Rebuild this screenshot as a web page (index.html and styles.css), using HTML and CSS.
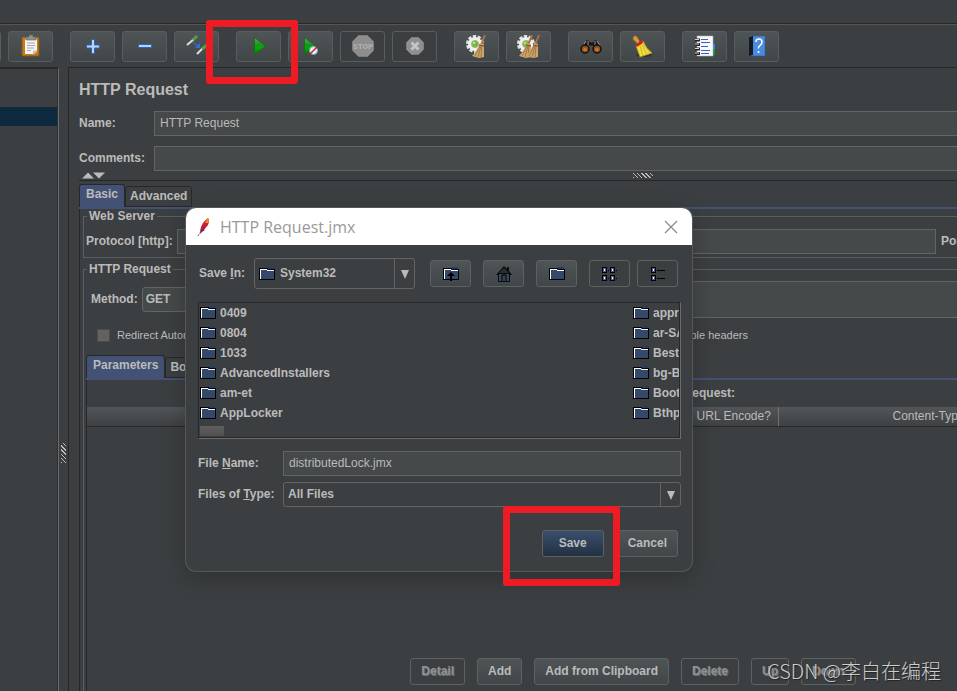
FILE: index.html
```html
<!DOCTYPE html>
<html lang="en">
<head>
    <meta charset="UTF-8">
    <meta name="viewport" content="width=device-width, initial-scale=1.0">
    <title>HTTP Request.jmx</title>
    <link rel="stylesheet" href="styles.css">
</head>
<body>
    <!-- Shared icons -->
    <svg class="defs" aria-hidden="true">
        <defs>
            <linearGradient id="green" x1="0" y1="0" x2="0" y2="1">
                <stop offset="0" stop-color="#5fa75a"/>
                <stop offset="0.5" stop-color="#14901a"/>
                <stop offset="0.55" stop-color="#00b400"/>
                <stop offset="1" stop-color="#067a06"/>
            </linearGradient>
            <symbol id="folder" viewBox="0 0 16 14">
                <path d="M9 0h6v2H9z" fill="#283a63"/>
                <path d="M0 1h9v1h7v11H0z" fill="#000"/>
                <path d="M1 2h8l1 1h5v9H1z" fill="#34486a"/>
                <path d="M1 12V2h7v1h7v1H8V3H2v9z" fill="#fff"/>
            </symbol>
            <symbol id="gear" viewBox="0 0 18 18">
                <circle cx="9" cy="9" r="7" fill="none" stroke="#e4e4e4" stroke-width="4" stroke-dasharray="3 1.4"/>
                <circle cx="9" cy="9" r="5" fill="none" stroke="#efefef" stroke-width="4"/>
                <circle cx="9" cy="9" r="3.5" fill="#74bd24" stroke="#a9a9a9" stroke-width="1"/>
                <circle cx="8" cy="8" r="1.3" fill="#b5e66a"/>
            </symbol>
            <symbol id="broom" viewBox="0 0 14 24">
                <path d="M13 1L9 11" stroke="#a87344" stroke-width="2"/>
                <path d="M8 9l4 1v13l-5 1-7-2q5-5 8-13z" fill="#cfa56c"/>
                <path d="M8 12L3 22M9 12L6 23M10 12l-1 11" stroke="#94693a" stroke-width=".8" fill="none"/>
                <path d="M7 11l5 1" stroke="#704722" stroke-width="1"/>
            </symbol>
        </defs>
    </svg>

    <header class="menubar"></header>

    <div class="toolbar">
        <button class="tool cut" type="button" aria-label="Copy"></button>
        <button class="tool" type="button" aria-label="Paste">
            <svg viewBox="0 0 25 25">
                <rect x="4" y="3" width="17" height="19" rx="1" fill="#c07d20" stroke="#8e570c"/>
                <path d="M7 5h12v12l-3 3H7z" fill="#f4f4f4"/>
                <path d="M19 16l-4 1v4z" fill="#bdbdbd"/>
                <path d="M9 9h8M9 11.500h8M9 14h7M9 16.500h4" stroke="#a8a8a8"/>
                <path d="M8 3h3V1h4v2h3v3H8z" fill="#8d938d" stroke="#5a605a" stroke-width=".6"/>
            </svg>
        </button>
        <button class="tool group" type="button" aria-label="Expand All">
            <svg viewBox="0 0 25 25">
                <path d="M6.500 11h5V5.500h3V11h5v3h-5v5.500h-3V14h-5z" fill="#b7d3f5" stroke="#2e66b4"/>
            </svg>
        </button>
        <button class="tool" type="button" aria-label="Collapse All">
            <svg viewBox="0 0 25 25">
                <path d="M6.500 10.500h13v3h-13z" fill="#b7d3f5" stroke="#2e66b4"/>
            </svg>
        </button>
        <button class="tool" type="button" aria-label="Toggle">
            <svg viewBox="0 0 25 25">
                <path d="M3 11l7-6" stroke="#dededa" stroke-width="2"/>
                <path d="M9 6l4-4" stroke="#5c9a43" stroke-width="3"/>
                <path d="M13 20l6-6" stroke="#dededa" stroke-width="2"/>
                <path d="M18 15l5-4" stroke="#5c9a43" stroke-width="3"/>
                <path d="M9 8l5 4" stroke="#2b74de" stroke-width="1.500" stroke-dasharray="2 1"/>
                <path d="M16 9v5h-5z" fill="#2b74de"/>
            </svg>
        </button>
        <button class="tool group" type="button" aria-label="Start">
            <svg viewBox="0 0 25 25">
                <path d="M8.500 3.500L19.500 12 8.500 20.500z" fill="url(#green)" stroke="#176b19" stroke-width=".8"/>
            </svg>
        </button>
        <button class="tool" type="button" aria-label="Start no pauses">
            <svg viewBox="0 0 25 25">
                <path d="M6.500 3.500L17.500 12 6.500 20.500z" fill="url(#green)" stroke="#176b19" stroke-width=".8"/>
                <circle cx="15.500" cy="16.500" r="4" fill="#e8f1fb" stroke="#7b9fc6"/>
                <path d="M12 20l7-7" stroke="#d51c1c" stroke-width="1.500"/>
            </svg>
        </button>
        <button class="tool" type="button" aria-label="Stop" disabled>
            <svg viewBox="0 0 25 25">
                <path d="M8.500 1.500h9l6 6v9l-6 6h-9l-6-6v-9z" fill="#8d8d8d" stroke="#7c7c7c"/>
                <text x="13" y="15" text-anchor="middle" class="stop-word">STOP</text>
            </svg>
        </button>
        <button class="tool" type="button" aria-label="Shutdown" disabled>
            <svg viewBox="0 0 25 25">
                <path d="M9.500 3.500h7l5 5v7l-5 5h-7l-5-5v-7z" fill="#8f8f8f" stroke="#7e7e7e"/>
                <path d="M9.500 8.500l7 7m0-7l-7 7" stroke="#c5c5c5" stroke-width="3"/>
            </svg>
        </button>
        <button class="tool group" type="button" aria-label="Clear">
            <svg viewBox="0 0 25 25">
                <use href="#gear" x="2" y="1" width="18" height="18"/>
                <use href="#broom" x="8" y="0" width="14" height="24"/>
            </svg>
        </button>
        <button class="tool" type="button" aria-label="Clear All">
            <svg viewBox="0 0 25 25">
                <use href="#gear" x="1" y="1" width="18" height="18"/>
                <use href="#broom" x="3" y="0" width="14" height="24"/>
                <use href="#broom" x="10" y="0" width="14" height="24"/>
            </svg>
        </button>
        <button class="tool group" type="button" aria-label="Search">
            <svg viewBox="0 0 25 25">
                <path d="M3 13L8 6h3l1 2h3l1-2h3l4 7v3h-8v-4h-4v4H3z" fill="#161616" stroke="#5b5b5b" stroke-width=".7"/>
                <path d="M8 7l-3 5M19 7l3 5M10 7v5M17 7v5" stroke="#aaa" stroke-width=".9"/>
                <circle cx="7" cy="15" r="4" fill="#944f19" stroke="#111" stroke-width="1.500"/>
                <circle cx="19" cy="15" r="4" fill="#944f19" stroke="#111" stroke-width="1.500"/>
                <circle cx="7" cy="15.500" r="1.800" fill="#c47534"/>
                <circle cx="19" cy="15.500" r="1.800" fill="#c47534"/>
            </svg>
        </button>
        <button class="tool" type="button" aria-label="Reset Search">
            <svg viewBox="0 0 25 25">
                <ellipse cx="14" cy="21" rx="8" ry="2" fill="#333637"/>
                <path d="M3 3q3-3 5 1l2 4-3 2q-1-3-4-4z" fill="#d59a3f" stroke="#8a5a1b" stroke-width=".8"/>
                <path d="M6 12l7-5q3 7 9 12l-12 4Q8 17 6 12z" fill="#f1de3d" stroke="#ad9517" stroke-width=".7"/>
                <path d="M10 12l3 10M12 11l5 10M13 10l7 9" stroke="#c9ae20" stroke-width=".8" fill="none"/>
                <path d="M6 11l6-5 1 3-6 4z" fill="#d51d1d"/>
            </svg>
        </button>
        <button class="tool group" type="button" aria-label="Function Helper">
            <svg viewBox="0 0 25 25">
                <path d="M20 10h3v5h-3z" fill="#2584ea"/>
                <path d="M20 15h3v6h-3z" fill="#159019"/>
                <path d="M5 2h16v20H5z" fill="#f8f8f8" stroke="#b2b2b2" stroke-width=".6"/>
                <path d="M9 5.500h7M9 8.500h9M9 12.500h7M9 16.500h9M9 19.500h8" stroke="#2e68c5"/>
                <path d="M3 6h5M3 10.500h5M3 15h5M3 19.500h5" stroke="#222" stroke-width="3"/>
                <path d="M3 5.500h4M3 10h4M3 14.500h4M3 19h4" stroke="#d8d8d8"/>
            </svg>
        </button>
        <button class="tool" type="button" aria-label="Help">
            <svg viewBox="0 0 25 25">
                <path d="M6 2h15v20H5V3z" fill="#4a8be0" stroke="#2a5a9c" stroke-width=".6"/>
                <path d="M5 3l4-1v19l-4 1z" fill="#17191c"/>
                <path d="M12 8q0-3 3-3t3 3q0 2-2 3.500t-1.500 3" stroke="#fff" stroke-width="1.500" fill="none"/>
                <circle cx="14.500" cy="18" r="1.100" fill="#fff"/>
            </svg>
        </button>
    </div>

    <div class="workspace">
        <aside class="tree">
            <div class="tree-selected"></div>
        </aside>
        <div class="splitter"><span class="grip grip-v"></span></div>

        <main class="panel">
            <h1>HTTP Request</h1>
            <div class="field-row">
                <label for="name">Name:</label>
                <input id="name" type="text" value="HTTP Request">
            </div>
            <div class="field-row">
                <label for="comments">Comments:</label>
                <input id="comments" type="text">
            </div>
            <div class="split-bar">
                <svg width="24" height="7" viewBox="0 0 24 7"><path d="M0 6.500L6 .5l6 6zM11 .5h12l-6 6z" fill="#bbb"/></svg>
                <span class="grip grip-h"></span>
            </div>

            <div class="tabs">
                <button class="tab active" type="button">Basic</button>
                <button class="tab" type="button">Advanced</button>
            </div>
            <div class="tab-page">
                <fieldset>
                    <legend>Web Server</legend>
                    <div class="server-row">
                        <label for="protocol">Protocol [http]:</label>
                        <input id="protocol" type="text">
                        <label class="port" for="protocol">Port Number:</label>
                    </div>
                </fieldset>
                <fieldset class="request">
                    <legend>HTTP Request</legend>
                    <div class="method-row">
                        <label for="method">Method:</label>
                        <select id="method"><option>GET</option></select>
                        <input type="text" aria-label="Path">
                    </div>
                    <div class="check-row">
                        <label><input type="checkbox">Redirect Automatically</label>
                        <label class="headers">Browser-compatible headers</label>
                    </div>
                    <div class="tabs inner">
                        <button class="tab active" type="button">Parameters</button>
                        <button class="tab" type="button">Body Data</button>
                    </div>
                    <div class="params">
                        <p>Send Parameters With the Request:</p>
                        <table>
                            <thead>
                                <tr>
                                    <th></th>
                                    <th class="encode">URL Encode?</th>
                                    <th class="ctype">Content-Type</th>
                                </tr>
                            </thead>
                        </table>
                        <div class="actions">
                            <button class="btn" type="button" disabled>Detail</button>
                            <button class="btn" type="button">Add</button>
                            <button class="btn" type="button">Add from Clipboard</button>
                            <button class="btn" type="button" disabled>Delete</button>
                            <button class="btn" type="button" disabled>Up</button>
                            <button class="btn" type="button" disabled>Down</button>
                        </div>
                    </div>
                </fieldset>
            </div>
        </main>
    </div>

    <!-- Save dialog -->
    <div class="dialog" role="dialog" aria-labelledby="dialogTitle">
        <div class="dialog-title">
            <svg width="14" height="20" viewBox="0 0 14 20">
                <path d="M11 1q2 2 0 7l-4 5-4 2q0-5 3-9 2-3 5-5z" fill="#c9213c"/>
                <path d="M11 1q2 2 0 5L8 6q1-3 3-5z" fill="#f28b27"/>
                <path d="M4 12l4 1-3 2-2 2z" fill="#7b2767"/>
                <path d="M1 19L8 8" stroke="#5b2050" stroke-width=".8" stroke-dasharray="2 1"/>
            </svg>
            <span id="dialogTitle">HTTP Request.jmx</span>
            <button class="close" type="button" aria-label="Close">
                <svg width="14" height="14" viewBox="0 0 14 14"><path d="M1 1l12 12M13 1L1 13" stroke="#8a8a8a" stroke-width="1.200"/></svg>
            </button>
        </div>
        <div class="dialog-body">
            <div class="save-in">
                <label for="saveIn">Save <u>I</u>n:</label>
                <div class="combo">
                    <select id="saveIn"><option>System32</option></select>
                    <svg class="combo-icon" width="16" height="14"><use href="#folder"/></svg>
                </div>
                <button class="nav" type="button" aria-label="Up One Level">
                    <svg width="16" height="16" viewBox="0 0 16 16">
                        <use href="#folder" y="1" width="16" height="14"/>
                        <path d="M8 6l4 4H9v5H7v-5H4z" fill="#000"/>
                    </svg>
                </button>
                <button class="nav" type="button" aria-label="Home">
                    <svg width="16" height="16" viewBox="0 0 16 16">
                        <path d="M8 0l3 3V1h2v4l3 4h-2v7H2V9H0z" fill="#0a0a0a"/>
                        <path d="M3 8h10v7H3z" fill="#34486a"/>
                        <path d="M8 2l5 5H3z" fill="#2b2e30"/>
                        <path d="M6 15V9h4v6" fill="#3c4145" stroke="#000"/>
                    </svg>
                </button>
                <button class="nav" type="button" aria-label="Create New Folder">
                    <svg width="16" height="14"><use href="#folder"/></svg>
                </button>
                <button class="nav flat" type="button" aria-label="List">
                    <svg width="16" height="16" viewBox="0 0 16 16">
                        <path d="M0 1h5v6H0zM8 1h5v6H8zM0 9h5v6H0zM8 9h5v6H8zM6 4h1v1H6zM14 4h1v1h-1zM6 12h1v1H6zM14 12h1v1h-1z" fill="#000"/>
                        <path d="M1 2h3v4H1zM9 2h3v4H9zM1 10h3v4H1zM9 10h3v4H9z" fill="#4a6291"/>
                        <path d="M2 3h1v2H2zM10 3h1v2h-1zM2 11h1v2H2zM10 11h1v2h-1z" fill="#fff"/>
                    </svg>
                </button>
                <button class="nav flat" type="button" aria-label="Details">
                    <svg width="16" height="16" viewBox="0 0 16 16">
                        <path d="M1 1h5v6H1zM1 9h5v6H1zM7 4h8v1H7zM7 12h8v1H7z" fill="#000"/>
                        <path d="M2 2h3v4H2zM2 10h3v4H2z" fill="#4a6291"/>
                        <path d="M3 3h1v2H3zM3 11h1v2H3z" fill="#fff"/>
                    </svg>
                </button>
            </div>

            <div class="files">
                <ul>
                    <li><svg width="16" height="14"><use href="#folder"/></svg>0409</li>
                    <li><svg width="16" height="14"><use href="#folder"/></svg>0804</li>
                    <li><svg width="16" height="14"><use href="#folder"/></svg>1033</li>
                    <li><svg width="16" height="14"><use href="#folder"/></svg>AdvancedInstallers</li>
                    <li><svg width="16" height="14"><use href="#folder"/></svg>am-et</li>
                    <li><svg width="16" height="14"><use href="#folder"/></svg>AppLocker</li>
                </ul>
                <ul class="second">
                    <li><svg width="16" height="14"><use href="#folder"/></svg>appraiser</li>
                    <li><svg width="16" height="14"><use href="#folder"/></svg>ar-SA</li>
                    <li><svg width="16" height="14"><use href="#folder"/></svg>BestPractices</li>
                    <li><svg width="16" height="14"><use href="#folder"/></svg>bg-BG</li>
                    <li><svg width="16" height="14"><use href="#folder"/></svg>Boot</li>
                    <li><svg width="16" height="14"><use href="#folder"/></svg>Bthprops</li>
                </ul>
                <div class="thumb"></div>
            </div>

            <div class="form-row">
                <label for="fileName">File <u>N</u>ame:</label>
                <input id="fileName" type="text" value="distributedLock.jmx">
            </div>
            <div class="form-row">
                <label for="fileType">Files of <u>T</u>ype:</label>
                <div class="combo">
                    <select id="fileType"><option>All Files</option></select>
                </div>
            </div>
            <div class="dialog-actions">
                <button class="btn primary" type="button">Save</button>
                <button class="btn" type="button">Cancel</button>
            </div>
        </div>
    </div>

    <div class="mark mark-start"></div>
    <div class="mark mark-save"></div>
    <div class="watermark">CSDN @李白在编程</div>
</body>
</html>
```
FILE: styles.css
```css
* {
    box-sizing: border-box;
}
body {
    margin: 0;
    min-height: 100vh;
    display: flex;
    flex-direction: column;
    position: relative;
    overflow: hidden;
    background: #3c3f41;
    color: #bbbbbb;
    font: bold 12px/15px "Liberation Sans", Arial, sans-serif;
}
button, input, select {
    font: inherit;
    color: inherit;
    margin: 0;
}
.defs {
    position: absolute;
    width: 0;
    height: 0;
}
svg {
    display: block;
    flex: none;
}

/* Menu and toolbar */
.menubar {
    height: 25px;
    border-bottom: 1px solid #555555;
    box-shadow: inset 0 -1px #282828;
}
.toolbar {
    display: flex;
    gap: 7px;
    padding: 6px 0 5px;
    overflow: hidden;
}
.tool {
    flex: none;
    width: 45px;
    height: 31px;
    padding: 0;
    display: flex;
    align-items: center;
    justify-content: center;
    border: 1px solid #5a5d5e;
    border-radius: 3px;
    background: linear-gradient(#4f5557, #414648);
}
.tool svg {
    width: 25px;
    height: 25px;
}
.tool:disabled {
    background: none;
}
.tool.cut {
    margin-left: -44px;
}
.tool.group {
    margin-left: 10px;
}
.stop-word {
    font: bold 8px Roboto, sans-serif;
    fill: #b2b2b2;
}

/* Workspace */
.workspace {
    flex: 1;
    display: flex;
    min-height: 0;
}
.tree {
    width: 59px;
    padding-top: 38px;
    border-top: 2px solid #282828;
    border-right: 1px solid #6a6c6d;
    box-shadow: inset -1px 0 #2e3031;
}
.tree-selected {
    height: 19px;
    margin-right: 1px;
    background: #0d293e;
}
.splitter {
    width: 9px;
    display: flex;
    align-items: center;
    justify-content: center;
    padding-top: 148px;
}
.grip {
    background: repeating-linear-gradient(45deg, #bbbbbb 0 1px, #3c3f41 1px 3px);
}
.grip-v {
    width: 5px;
    height: 20px;
}
.grip-h {
    width: 20px;
    height: 5px;
}
.panel {
    flex: 1;
    min-width: 0;
    display: flex;
    flex-direction: column;
    padding: 12px 0 0 10px;
    border-top: 1px solid #282828;
    border-left: 1px solid #282828;
}
h1 {
    margin: 0 0 11px;
    font-size: 16px;
    line-height: 20px;
}
input[type="text"] {
    min-width: 0;
    height: 25px;
    padding: 0 5px 2px;
    border: 1px solid #646464;
    border-radius: 0;
    background: #45494a;
    font-weight: normal;
    outline: none;
}
.field-row {
    display: flex;
    align-items: center;
}
.field-row + .field-row {
    margin-top: 10px;
}
.field-row label {
    width: 75px;
}
.field-row input {
    flex: 1;
    border-right: 0;
}
.split-bar {
    display: flex;
    align-items: center;
    height: 10px;
    padding-right: 304px;
    border-bottom: 1px solid #282828;
}
.split-bar svg {
    margin-left: 3px;
}
.split-bar .grip {
    margin-left: auto;
}

/* Tabs */
.tabs {
    display: flex;
    align-items: flex-end;
    margin-top: 3px;
    border-bottom: 2px solid #435274;
}
.tab {
    height: 21px;
    padding: 0 4px;
    border: 1px solid #282828;
    border-radius: 3px 3px 0 0;
    background: none;
}
.tab.active {
    height: 23px;
    padding: 0 6px 3px;
    border-bottom: 0;
    background: #435274;
}
.tab-page {
    flex: 1;
    display: flex;
    flex-direction: column;
    padding-left: 3px;
    border-left: 1px solid #282828;
}
fieldset {
    min-width: 0;
    margin: 0;
    padding: 5px 0 3px 2px;
    border: 1px solid #5c5f60;
    border-right: 0;
}
legend {
    margin-left: 1px;
    padding: 0 2px;
}
.server-row {
    display: flex;
    align-items: center;
}
.server-row label {
    flex: none;
}
.server-row input {
    flex: 1;
    margin: 0 5px 0 4px;
}
.server-row .port {
    width: 16px;
    overflow: hidden;
    white-space: nowrap;
}
.request {
    flex: 1;
    display: flex;
    flex-direction: column;
    margin-top: 4px;
    padding-top: 4px;
    padding-bottom: 0;
    border-bottom: 0;
}
.method-row {
    display: flex;
    align-items: center;
    padding-left: 5px;
}
.method-row select {
    width: 100px;
    height: 25px;
    margin: 0 40px 0 4px;
    padding: 0 3px 1px;
    appearance: none;
    border: 1px solid #646464;
    border-radius: 3px;
    background: #45494a;
}
.method-row input[type="text"] {
    flex: 1;
    height: 37px;
    border-right: 0;
}
.check-row {
    display: flex;
    align-items: center;
    justify-content: space-between;
    margin-top: 10px;
    padding: 0 209px 0 11px;
    font-size: 11px;
    font-weight: normal;
}
.check-row label {
    display: flex;
    align-items: center;
    gap: 7px;
}
.check-row input {
    appearance: none;
    width: 13px;
    height: 13px;
    border: 1px solid #4c4c4c;
    background: #626262;
}
.tabs.inner {
    margin-top: 12px;
}
.params {
    flex: 1;
    display: flex;
    flex-direction: column;
    border-left: 1px solid #282828;
    overflow: hidden;
}
.params p {
    margin: 6px 222px 6px 0;
    text-align: right;
}
table {
    width: 100%;
    table-layout: fixed;
    border-collapse: collapse;
}
th {
    height: 19px;
    padding: 0;
    font-weight: normal;
    white-space: nowrap;
    border-bottom: 1px solid #282828;
    background: linear-gradient(#525658, #3e4143);
}
.encode {
    width: 88px;
    border-right: 1px solid #707273;
}
.ctype {
    width: 179px;
    padding-left: 114px;
    text-align: left;
    overflow: hidden;
}
.actions {
    display: flex;
    justify-content: center;
    gap: 12px;
    margin-top: auto;
    margin-left: 222px;
    padding-bottom: 6px;
}
.btn {
    height: 27px;
    padding: 0 10px;
    border: 1px solid #5e6162;
    border-radius: 3px;
    background: linear-gradient(#4f5557, #414648);
    white-space: nowrap;
}
.btn:disabled {
    background: none;
    color: #8f9294;
    text-shadow: 1px 1px #6f7274;
}
.btn.primary {
    width: 62px;
    background: linear-gradient(#384f6b, #233143);
}

/* Save dialog */
.dialog {
    position: absolute;
    left: 186px;
    top: 208px;
    width: 506px;
    border-radius: 10px;
    background: #3c3f41;
    box-shadow: 0 0 0 1px #555859, 0 6px 24px rgba(0, 0, 0, 0.25);
    overflow: hidden;
}
.dialog-title {
    display: flex;
    align-items: center;
    gap: 9px;
    height: 37px;
    padding: 0 14px 0 11px;
    background: #ffffff;
    color: #999999;
    font: 16px/20px "Open Sans", sans-serif;
}
.close {
    margin-left: auto;
    padding: 0;
    border: 0;
    background: none;
}
.dialog-body {
    padding: 13px 11px 14px 12px;
}
.save-in {
    display: flex;
    align-items: center;
    padding-left: 1px;
}
.save-in label {
    flex: none;
    width: 55px;
}
.combo {
    position: relative;
}
.combo select {
    width: 100%;
    height: 25px;
    padding: 0 4px 1px;
    appearance: none;
    border: 1px solid #646464;
    border-radius: 3px;
    background: #3c3f41;
    outline: none;
}
.combo::before {
    content: "";
    position: absolute;
    top: 0;
    bottom: 0;
    right: 20px;
    border-left: 1px solid #646464;
}
.combo::after {
    content: "";
    position: absolute;
    right: 6px;
    top: 50%;
    margin-top: -4px;
    border: 4px solid transparent;
    border-top: 9px solid #bbbbbb;
    border-bottom: 0;
}
.save-in .combo {
    flex: none;
    width: 161px;
    margin-right: 15px;
}
.save-in select {
    height: 31px;
    display: block;
    padding-left: 25px;
}
.combo-icon {
    position: absolute;
    left: 5px;
    top: 9px;
}
.nav {
    flex: none;
    width: 41px;
    height: 27px;
    margin-right: 12px;
    padding: 0;
    display: flex;
    align-items: center;
    justify-content: center;
    border: 1px solid #5e6162;
    border-radius: 3px;
    background: linear-gradient(#4f5557, #414648);
}
.nav.flat {
    margin-right: 7px;
    background: none;
}
.nav:last-child {
    margin-right: 0;
}
.files {
    display: grid;
    grid-template-columns: 433px 1fr;
    margin-top: 13px;
    padding: 0 0 1px 1px;
    border: 1px solid #282828;
    border-right-color: #6a6c6d;
    border-bottom-color: #6a6c6d;
    box-shadow: inset -1px -1px #282828;
}
.files ul {
    margin: 0;
    padding: 0;
    list-style: none;
}
.files .second {
    overflow: hidden;
    margin-right: 1px;
}
.files li {
    display: flex;
    align-items: center;
    gap: 4px;
    height: 20px;
    white-space: nowrap;
}
.thumb {
    width: 24px;
    height: 10px;
    margin: 3px 0 1px;
    border-radius: 1px;
    background: linear-gradient(#5f5f5f, #505050);
}
.form-row {
    display: flex;
    align-items: center;
    margin-top: 6px;
}
.files + .form-row {
    margin-top: 12px;
}
.form-row label {
    width: 85px;
}
.form-row input,
.form-row .combo {
    flex: 1;
}
.form-row select {
    display: block;
}
.dialog-actions {
    display: flex;
    justify-content: flex-end;
    gap: 13px;
    margin-top: 23px;
    padding-right: 3px;
}

/* Red highlights */
.mark {
    position: absolute;
    border: 7px solid #ed1c24;
    border-radius: 3px;
}
.mark-start {
    left: 206px;
    top: 20px;
    width: 92px;
    height: 64px;
}
.mark-save {
    left: 503px;
    top: 506px;
    width: 117px;
    height: 80px;
}
.watermark {
    position: absolute;
    right: 16px;
    bottom: 5px;
    color: #c9cbcc;
    font: 300 20px/30px "Noto Sans CJK SC", sans-serif;
    text-shadow: 1px 1px 1px #222222;
}
```
